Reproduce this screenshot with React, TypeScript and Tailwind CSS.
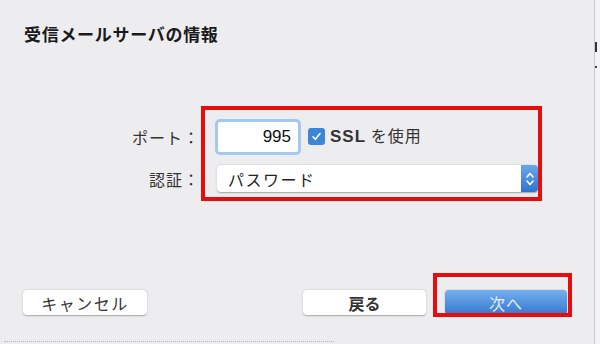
const jp = "font-['Hiragino_Sans','Noto_Sans_CJK_JP',sans-serif]";

function Stepper() {
    return (
        <div className="flex h-full w-[17px] flex-col items-center justify-center rounded-r-[4px] bg-gradient-to-b from-[#6aa6ea] to-[#2f74d0]">
            <svg width="10" height="18" viewBox="0 0 10 18" fill="none" stroke="white" strokeWidth="1.6" strokeLinecap="round" strokeLinejoin="round">
                <path d="M2 7 L5 3.5 L8 7" />
                <path d="M2 11 L5 14.5 L8 11" />
            </svg>
        </div>
    );
}

export default function App() {
    return (
        <div className={`relative flex h-[344px] w-[600px] overflow-hidden bg-[#ededf0] text-[#222] ${jp}`}>
            <div className="flex w-[595px] flex-col border-r border-[#c9c9cc]">
                <h1 className="pl-[24px] pt-[24px] text-[17px] font-bold leading-[20px] tracking-[0.7px] text-[#1a1a1a]">
                    受信メールサーバの情報
                </h1>

                <div className="mt-[74px] flex h-[37px] items-center">
                    <label className="w-[200px] text-right text-[16px] tracking-[1px] text-[#333]">ポート：</label>
                    <div className="ml-[15px] rounded-[5px] bg-[#a5c8ef] p-[3px]">
                        <div className="flex h-[30px] w-[80px] items-center justify-end rounded-[2px] bg-white pr-[7px] text-[17px] font-['Liberation_Sans',sans-serif] text-[#111]">
                            995
                        </div>
                    </div>
                    <div className="ml-[7px] flex h-[17px] w-[17px] items-center justify-center rounded-[3px] bg-[#3b86d9]">
                        <svg width="11" height="11" viewBox="0 0 11 11" fill="none" stroke="white" strokeWidth="1.6" strokeLinecap="round" strokeLinejoin="round">
                            <path d="M2 5.8 L4.4 8.3 L9 2.5" />
                        </svg>
                    </div>
                    <span className="ml-[5px] text-[16px] tracking-[1px] text-[#333]">
                        <span className="font-['Liberation_Sans',sans-serif] text-[17px] font-semibold">SSL</span> を使用
                    </span>
                </div>

                <div className="mt-[10px] flex h-[27px] items-center">
                    <label className="w-[200px] text-right text-[16px] tracking-[1px] text-[#333]">認証：</label>
                    <div className="ml-[17px] flex h-[27px] w-[321px] items-center rounded-[4px] bg-white shadow-[0_0.5px_1.5px_rgba(0,0,0,0.3)]">
                        <span className="flex-1 pl-[11px] text-[16px] tracking-[1.5px] text-[#222]">パスワード</span>
                        <Stepper />
                    </div>
                </div>

                <div className="mt-[98px] flex h-[25px] items-center">
                    <button className="ml-[23px] h-[25px] w-[124px] rounded-[4px] bg-white text-[16px] tracking-[1.5px] text-[#333] shadow-[0_0.5px_1.5px_rgba(0,0,0,0.3)]">
                        キャンセル
                    </button>
                    <button className="ml-[156px] h-[25px] w-[123px] rounded-[4px] bg-white text-[16px] font-semibold text-[#333] shadow-[0_0.5px_1.5px_rgba(0,0,0,0.3)]">
                        戻る
                    </button>
                    <button className="ml-[19px] h-[25px] w-[122px] rounded-[4px] bg-gradient-to-b from-[#74b0ee] to-[#3577d1] text-[16px] tracking-[1px] text-[#e4eefa] shadow-[0_0.5px_1.5px_rgba(0,0,0,0.3)]">
                        次へ
                    </button>
                </div>

                <div className="mt-auto mb-[2px] ml-[4px] w-[330px] border-t border-dotted border-[#b5b5b8]" />
            </div>
            <div className="flex-1 bg-[#f3f3f4] pt-[42px]">
                <div className="h-[10px] w-[2px] bg-[#333]" />
                <div className="mt-[14px] h-[2px] w-[2px] bg-[#444]" />
            </div>

            {/* 赤枠 */}
            <div className="pointer-events-none absolute left-[201px] top-[106px] h-[95px] w-[341px] border-[4px] border-[#e50d0d]" />
            <div className="pointer-events-none absolute left-[433px] top-[273px] h-[44px] w-[139px] border-[4px] border-[#e50d0d]" />
        </div>
    );
}
